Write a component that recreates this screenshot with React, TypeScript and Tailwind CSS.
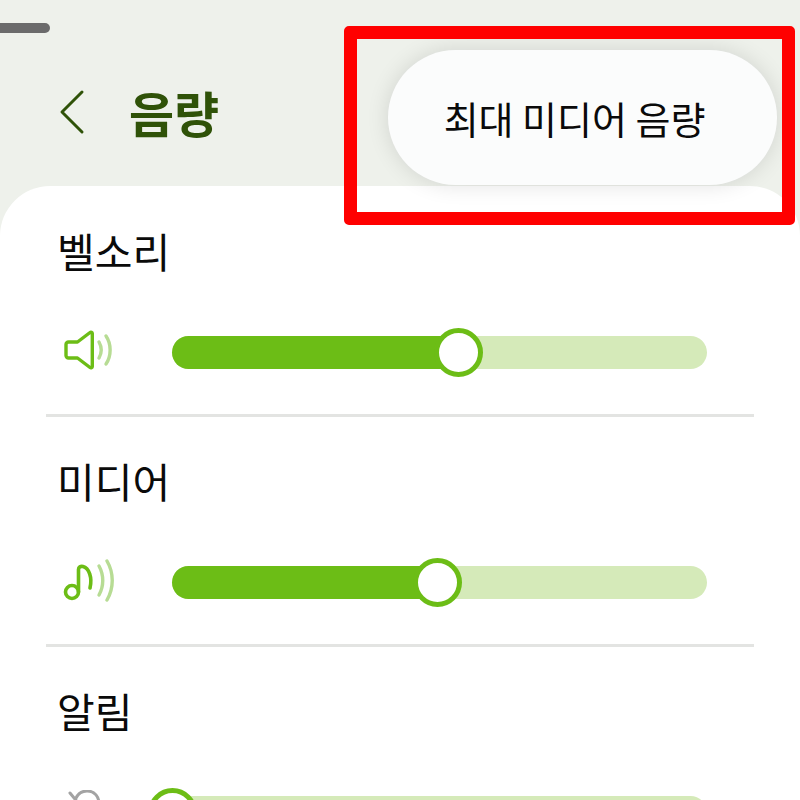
import type { ReactNode } from "react";

const fontStack = { fontFamily: '"Noto Sans CJK KR", "Noto Sans", sans-serif' };

function SpeakerIcon() {
  return (
    <svg width="50" height="44" viewBox="0 0 50 44" fill="none" strokeLinecap="round" strokeLinejoin="round">
      <path d="M3 14.500a2.500 2.500 0 0 1 2.500-2.500h9L27 2.500c1-.8 2.300-.2 2.300 1v33c0 1.200-1.300 1.800-2.300 1L14.500 28h-9A2.500 2.500 0 0 1 3 25.500z" stroke="#6cbd16" strokeWidth="3.400" />
      <path d="M36 12c2.800 5 2.800 11 0 16" stroke="#b7dc94" strokeWidth="3.400" />
      <path d="M43 6c5.500 8 5.500 20 0 28" stroke="#b7dc94" strokeWidth="3.400" />
    </svg>
  );
}

function NoteIcon() {
  return (
    <svg width="52" height="46" viewBox="0 0 52 46" fill="none" strokeLinecap="round" strokeLinejoin="round">
      <circle cx="9" cy="33" r="6.500" stroke="#6cbd16" strokeWidth="3.600" />
      <path d="M15.500 33V10.500c0-2.500 2-3.500 4.500-3 6 1.500 9.500 11 7 21.500" stroke="#6cbd16" strokeWidth="3.600" />
      <path d="M36 7c5 9 5 20 0 29" stroke="#b7dc94" strokeWidth="3.400" />
      <path d="M44 2c7 12 7 27 0 39" stroke="#b7dc94" strokeWidth="3.400" />
    </svg>
  );
}

function MutedBellIcon() {
  return (
    <svg width="44" height="44" viewBox="0 0 44 44" fill="none" strokeLinecap="round" strokeLinejoin="round">
      <path d="M7 3l28 34" stroke="#a3a3a3" strokeWidth="3" />
      <path d="M13 8c2-4 6-7 11-7 8 0 12 6 12 13v9l4 6H13" stroke="#a3a3a3" strokeWidth="3" />
    </svg>
  );
}

function VolumeRow({
  title,
  icon,
  percent,
  divider = true,
}: {
  title: string;
  icon: ReactNode;
  percent: number;
  divider?: boolean;
}) {
  return (
    <div className={divider ? "h-[230px] border-b-[3px] border-[#e3e4e2] pt-[33px]" : "h-[230px] pt-[33px]"}>
      <p className="h-[60px] pl-[11px] text-[41px] leading-[60px] text-[#0a0a0a]">{title}</p>
      <div className="mt-[42px] flex h-[60px] items-center">
        <div className="flex w-[126px] justify-start pl-[17px]">{icon}</div>
        <div className="flex h-[33px] w-[535px] items-center rounded-full bg-[#d5eab9]">
          <div className="h-full rounded-l-full bg-[#6cbd16]" style={{ width: `${percent}%` }} />
          <div className="-mx-[24px] h-[49px] w-[49px] shrink-0 rounded-full border-[5px] border-[#6cbd16] bg-white" />
        </div>
      </div>
    </div>
  );
}

export default function App() {
  return (
    <div className="relative h-[800px] w-[800px] overflow-hidden bg-[#eef1eb]" style={fontStack}>
      <header className="flex h-[186px] flex-col">
        <div className="mt-[23px] h-[10px] w-[50px] rounded-r-full bg-[#6b6b6b]" />
        <div className="mt-[17px] flex items-start pl-[59px]">
          <svg width="26" height="46" viewBox="0 0 26 46" fill="none" className="mt-[39px]">
            <path d="M23 3 L3 23 L23 43" stroke="#2f5208" strokeWidth="3" strokeLinecap="round" strokeLinejoin="round" />
          </svg>
          <h1 className="ml-[44px] mt-[34px] text-[49px] font-bold leading-[56px] text-[#2f5208]">음량</h1>
          <div className="relative z-10 ml-auto mr-[23px] flex h-[135px] w-[389px] items-center justify-center rounded-[68px] bg-[#fbfcfc] pr-[16px] text-[38px] text-[#0a0a0a] shadow-[0_0_22px_rgba(0,0,0,0.12)]">
            최대 미디어 음량
          </div>
        </div>
      </header>

      <main className="h-[614px] overflow-hidden rounded-t-[50px] bg-white px-[46px] pt-[1px]">
        <VolumeRow title="벨소리" icon={<SpeakerIcon />} percent={53.5} />
        <VolumeRow title="미디어" icon={<NoteIcon />} percent={49.5} />
        <VolumeRow title="알림" icon={<MutedBellIcon />} percent={0} divider={false} />
      </main>

      <div className="absolute left-[344px] top-[26px] z-20 h-[199px] w-[451px] rounded-[5px] border-[13px] border-[#ff0000]" />
    </div>
  );
}
